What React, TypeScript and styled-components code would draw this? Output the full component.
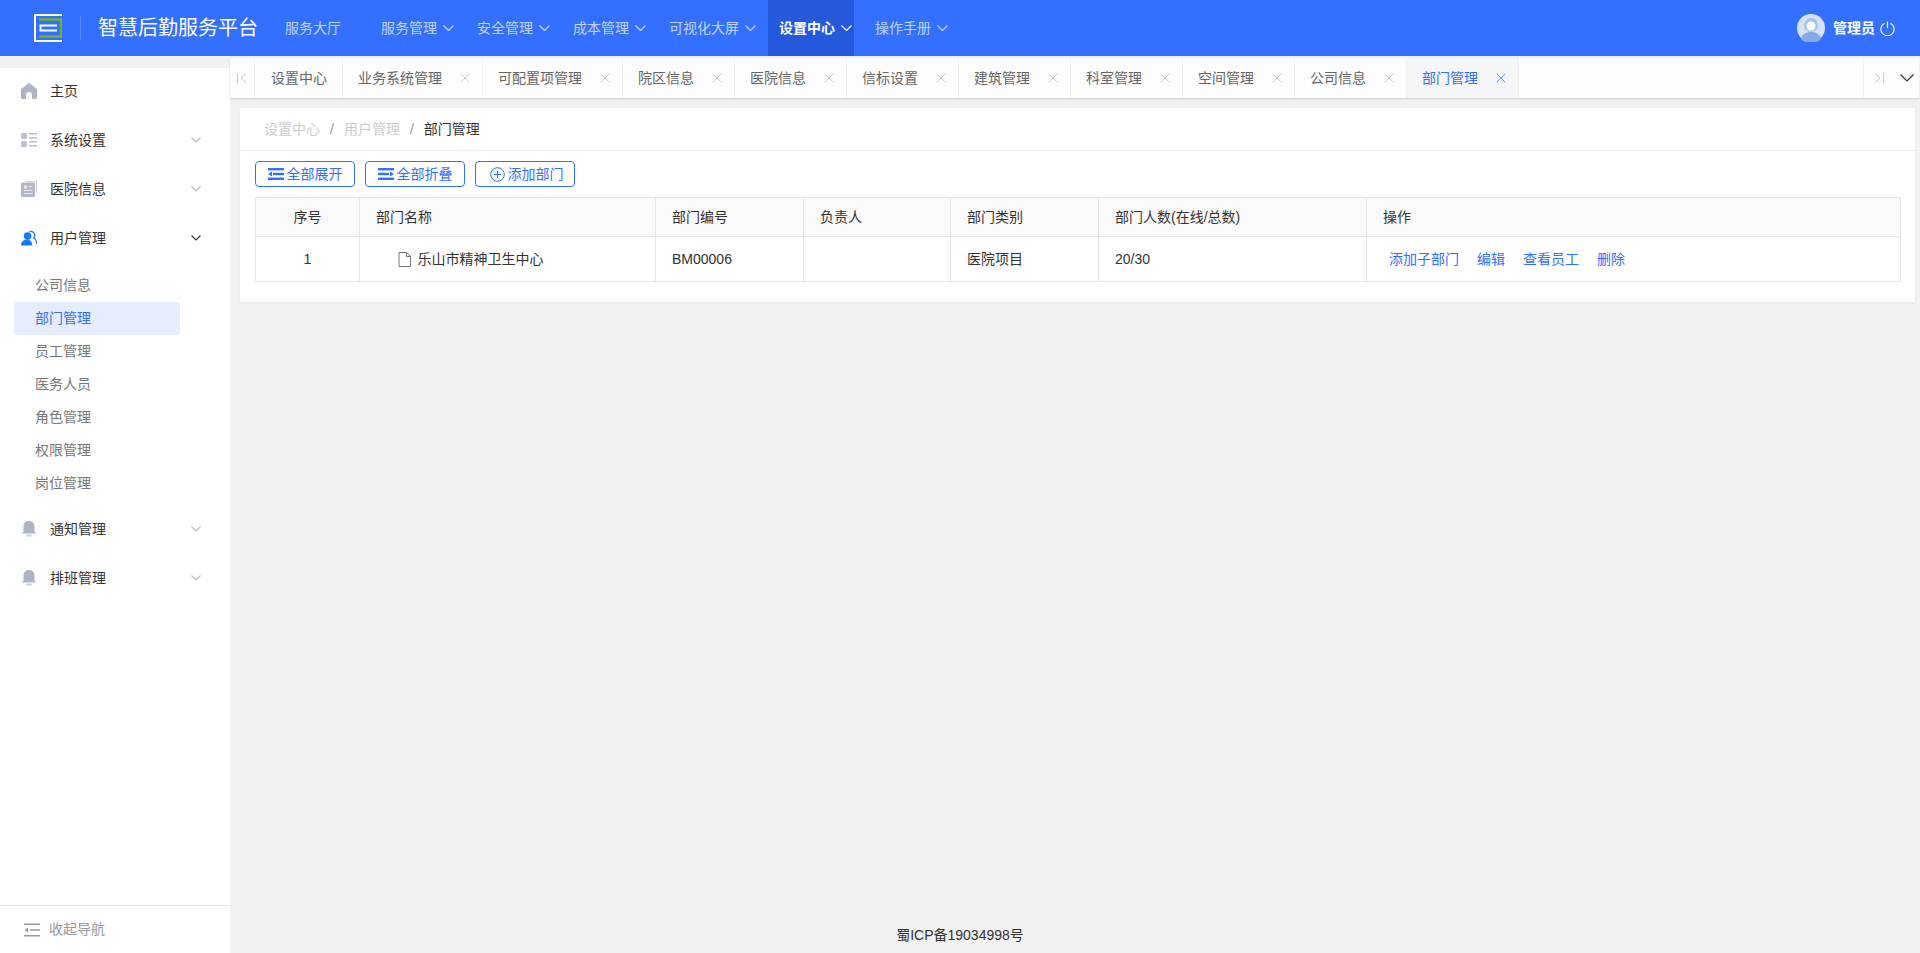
import React from 'react';
import styled, { createGlobalStyle } from 'styled-components';
import { X } from 'lucide-react';

const GlobalStyle = createGlobalStyle`
  html, body {
    margin: 0;
    height: 100%;
    overflow: hidden;
    background: #f1f1f1;
    font-family: "Liberation Sans", "Noto Sans CJK SC", sans-serif;
    font-size: 14px;
    line-height: 1.5;
    color: #333;
  }
  #root { height: 100%; }
`;

const Page = styled.div`
  display: flex;
  flex-direction: column;
  height: 953px;
`;

const Header = styled.header`
  display: flex;
  align-items: center;
  flex: 0 0 56px;
  height: 56px;
  background: #3370ff;
  color: #fff;
`;

const LogoBox = styled.div`
  display: flex;
  align-items: center;
  flex: 0 0 274px;
  padding-left: 34px;
  box-sizing: border-box;
`;

const LogoDivider = styled.span`
  width: 1px;
  height: 24px;
  margin: 0 17px 0 18px;
  background: rgba(255, 255, 255, 0.2);
`;

const Title = styled.span`
  font-size: 20px;
  white-space: nowrap;
`;

const Nav = styled.nav`
  display: flex;
  flex: 1;
  height: 56px;
`;

const NavItem = styled.div<{ $active?: boolean }>`
  display: flex;
  align-items: center;
  height: 56px;
  padding: 0 2px 0 11px;
  margin-right: 10px;
  font-size: 14px;
  font-weight: ${(p) => (p.$active ? 700 : 400)};
  color: ${(p) => (p.$active ? '#fff' : 'rgba(255, 255, 255, 0.7)')};
  background: ${(p) => (p.$active ? '#2559db' : 'transparent')};
  white-space: nowrap;
`;

const NavPlain = styled(NavItem)`
  padding-right: 19px;
`;

const NavArrow = styled.span`
  display: flex;
  margin-left: 6px;
  flex: none;
`;

const UserBox = styled.div`
  display: flex;
  align-items: center;
  padding-right: 25px;
`;

const UserName = styled.span`
  margin: 0 5px 0 8px;
  font-size: 14px;
  font-weight: 700;
`;

const Body = styled.div`
  display: flex;
  flex: 1;
  min-height: 0;
`;

const Sidebar = styled.aside`
  display: flex;
  flex-direction: column;
  flex: 0 0 230px;
  margin-top: 12px;
  background: #fff;
`;

const MenuScroll = styled.div`
  flex: 1;
`;

const MenuRow = styled.div`
  display: flex;
  align-items: center;
  height: 46px;
  margin-bottom: 3px;
  padding-left: 21px;
  color: #333;
`;

const MenuIcon = styled.span`
  display: flex;
  width: 16px;
  height: 16px;
  margin-right: 13px;
`;

const MenuLabel = styled.span`
  flex: 1;
`;

const MenuArrow = styled.span<{ $open?: boolean }>`
  display: flex;
  margin-right: 29px;
  color: ${(p) => (p.$open ? '#333' : '#bbb')};
`;

const SubMenu = styled.div`
  padding: 5px 0 6px;
`;

const SubItem = styled.div<{ $active?: boolean }>`
  display: flex;
  align-items: center;
  width: 166px;
  height: 33px;
  margin-left: 14px;
  padding-left: 21px;
  box-sizing: border-box;
  border-radius: 3px;
  color: ${(p) => (p.$active ? '#3370ff' : '#777')};
  background: ${(p) => (p.$active ? '#e5edff' : 'transparent')};
`;

const CollapseBar = styled.div`
  display: flex;
  align-items: center;
  flex: 0 0 48px;
  box-sizing: border-box;
  padding-left: 24px;
  border-top: 1px solid #e2e2e2;
  color: #999;
  svg {
    margin-right: 9px;
  }
`;

const Main = styled.main`
  display: flex;
  flex-direction: column;
  flex: 1;
  min-width: 0;
`;

const TabBar = styled.div`
  display: flex;
  flex: 0 0 40px;
  margin-top: 2px;
  background: #fdfdfd;
  box-shadow: 0 1px 2px rgba(0, 0, 0, 0.15);
`;

const TabArrow = styled.div<{ $w: number; $left?: boolean }>`
  display: flex;
  align-items: center;
  justify-content: center;
  flex: 0 0 ${(p) => p.$w}px;
  box-sizing: border-box;
  border-${(p) => (p.$left ? 'left' : 'right')}: 1px solid #f0f0f0;
`;

const TabList = styled.div`
  display: flex;
  flex: 1;
`;

const Tab = styled.div<{ $active?: boolean }>`
  display: flex;
  align-items: center;
  padding-left: 15px;
  box-sizing: border-box;
  border-right: 1px solid #f0f0f0;
  color: ${(p) => (p.$active ? '#3370ff' : '#666')};
  background: ${(p) => (p.$active ? '#f5f6f8' : 'transparent')};
  white-space: nowrap;
`;

const HomeTab = styled(Tab)`
  padding: 0 15px 0 16px;
`;

const TabClose = styled.span<{ $active?: boolean }>`
  display: flex;
  margin: 0 9px 0 15px;
  color: ${(p) => (p.$active ? '#3370ff' : '#bbb')};
`;

const Card = styled.section`
  margin: 10px 5px 0 10px;
  height: 194px;
  box-sizing: border-box;
  background: #fff;
  box-shadow: 0 1px 2px rgba(0, 0, 0, 0.05);
`;

const Breadcrumb = styled.div`
  display: flex;
  align-items: center;
  height: 43px;
  padding-left: 24px;
  box-sizing: border-box;
  border-bottom: 1px solid #eee;
`;

const Crumb = styled.span<{ $current?: boolean }>`
  color: ${(p) => (p.$current ? '#333' : '#ccc')};
`;

const CrumbSep = styled.span`
  margin: 0 10px;
  color: #999;
`;

const Toolbar = styled.div`
  display: flex;
  gap: 10px;
  padding: 10px 15px;
`;

const ToolButton = styled.button`
  display: flex;
  align-items: center;
  justify-content: center;
  width: 100px;
  height: 26px;
  padding: 0;
  gap: 3px;
  border: 1px solid #3370ff;
  border-radius: 4px;
  background: #fff;
  color: #3370ff;
  font: inherit;
`;

const TableWrap = styled.div`
  padding: 0 15px;
`;

const Table = styled.table`
  width: 100%;
  table-layout: fixed;
  border-collapse: collapse;
  border: 1px solid #e6e6e6;
`;

const Th = styled.th`
  height: 38px;
  padding: 0 16px;
  border: 1px solid #e6e6e6;
  background: #fafafa;
  font-weight: 400;
  text-align: left;
  color: #333;
`;

const Td = styled.td`
  height: 44px;
  padding: 0 16px;
  border: 1px solid #e6e6e6;
  color: #333;
`;

const CenterTh = styled(Th)`
  text-align: center;
`;

const CenterTd = styled(Td)`
  text-align: center;
`;

const NameCell = styled.div`
  display: flex;
  align-items: center;
  padding-left: 22px;
  gap: 6.5px;
`;

const Actions = styled.div`
  display: flex;
  padding-left: 6px;
  gap: 18px;
`;

const ActionLink = styled.a`
  color: #3370ff;
  cursor: pointer;
`;

const Footer = styled.footer`
  margin-top: auto;
  height: 28px;
  padding-right: 230px;
  text-align: center;
  color: #333;
`;

const Chevron = ({ w, stroke = 'currentColor' }: { w: number; stroke?: string }) => (
  <svg width={w} height={w / 2 + 1} viewBox={`0 0 ${w} ${w / 2 + 1}`} fill="none" stroke={stroke} strokeWidth="1.2">
    <path d={`M.5 .5 ${w / 2} ${w / 2} ${w - 0.5} .5`} />
  </svg>
);

const Logo = () => (
  <svg width="28" height="28" viewBox="0 0 28 28" fill="none">
    <path d="M28 1H1V27H28" stroke="#fff" strokeWidth="2" />
    <path d="M5 5.500H27V22.500H5" stroke="#6fb52c" strokeWidth="2.500" />
    <path d="M23 11.500H6.500V16.500H23" stroke="#fff" strokeWidth="2" />
  </svg>
);

const Avatar = () => (
  <svg width="28" height="28" viewBox="0 0 28 28">
    <circle cx="14" cy="14" r="14" fill="#d5e2f8" />
    <circle cx="14" cy="11" r="7" fill="#a9c2ee" />
    <circle cx="14" cy="12" r="4.500" fill="#fff" />
    <path d="M4 25c1-5 5-7 10-7s9 2 10 7a14 14 0 0 1-20 0z" fill="#86a8e4" />
  </svg>
);

const PowerIcon = () => (
  <svg width="15" height="15" viewBox="0 0 15 15" fill="none" stroke="#fff" strokeWidth="1.1">
    <path d="M4.600 2.200a6.600 6.600 0 1 0 5.800 0" />
    <path d="M7.500 0.500V7" />
  </svg>
);

const HomeIcon = () => (
  <svg width="16" height="16" viewBox="0 0 16 16" fill="#aeb3c6">
    <path d="M8 0 16 6V15a1 1 0 0 1-1 1H11V12A3 3 0 0 0 5 12V16H1a1 1 0 0 1-1-1V6z" />
  </svg>
);

const ListIcon = () => (
  <svg width="16" height="16" viewBox="0 0 16 16" fill="#bcc0d0">
    <rect x="0" y="1" width="6" height="6" rx="1.500" />
    <rect x="0" y="9" width="6" height="6" rx="1.500" />
    <rect x="8" y="1" width="8" height="1.600" />
    <rect x="8" y="5" width="8" height="1.600" />
    <rect x="8" y="9" width="8" height="1.600" />
    <rect x="8" y="13" width="8" height="1.600" />
  </svg>
);

const NewsIcon = () => (
  <svg width="16" height="16" viewBox="0 0 16 16">
    <path d="M5 .5H15.500V12" fill="none" stroke="#d0d3df" strokeWidth="1" />
    <rect x="0" y="1.500" width="14" height="14.500" rx="1.500" fill="#b4b8ca" />
    <rect x="3" y="4.500" width="3" height="3" fill="#e6e8ef" />
    <path d="M7.500 5.500H11.500M3 9.500H11.500M3 12.500H11.500" stroke="#e6e8ef" strokeWidth="1" />
  </svg>
);

const UsersIcon = () => (
  <svg width="17" height="16" viewBox="0 0 17 16">
    <path d="M9 1.200a4.200 4.200 0 0 1 4.500 6.800c1.800.8 3 3 3.200 6" fill="none" stroke="#1677ff" strokeWidth="1.300" />
    <circle cx="7" cy="6" r="4" fill="#1677ff" />
    <path d="M0 16c0-4 2.400-6.500 6.500-6.500 1 0 1.600.2 2 .4 2.300 1 3.500 3 3.500 6.100z" fill="#1677ff" />
  </svg>
);

const BellIcon = () => (
  <svg width="16" height="16" viewBox="0 0 16 16" fill="#aeb3c6">
    <path d="M8 0c3.500 0 5.500 2.300 5.500 5.500V10c0 1 .6 1.800 2.500 2.500H0C1.900 11.800 2.500 11 2.500 10V5.500C2.500 2.300 4.500 0 8 0z" />
    <rect x="5.500" y="13.500" width="5" height="2" fill="#c9ccd9" />
  </svg>
);

const CollapseIcon = ({ color = '#999' }: { color?: string }) => (
  <svg width="16" height="14" viewBox="0 0 16 14" fill={color}>
    <rect x="0" y="0.500" width="16" height="1.500" />
    <rect x="6" y="6.200" width="10" height="1.500" />
    <rect x="0" y="12" width="16" height="1.500" />
    <path d="M4 4.500V9.500L0.500 7z" />
  </svg>
);

const ExpandIcon = () => (
  <svg width="16" height="12" viewBox="0 0 16 12" fill="#3370ff">
    <rect x="0" y="0" width="16" height="2.400" />
    <rect x="5" y="4.800" width="11" height="2.400" />
    <rect x="0" y="9.600" width="16" height="2.400" />
    <path d="M4 3.500V8.500L0 6z" />
  </svg>
);

const FoldIcon = () => (
  <svg width="16" height="12" viewBox="0 0 16 12" fill="#3370ff">
    <rect x="0" y="0" width="16" height="2.400" />
    <rect x="0" y="4.800" width="11" height="2.400" />
    <rect x="0" y="9.600" width="16" height="2.400" />
    <path d="M12 3.500V8.500L16 6z" />
  </svg>
);

const PlusCircleIcon = () => (
  <svg width="18" height="15" viewBox="-3 0 18 15" fill="none" stroke="#3370ff" strokeWidth="1">
    <circle cx="7.500" cy="7.500" r="6.800" />
    <path d="M7.500 3.800V11.200M3.800 7.500H11.200" />
  </svg>
);

const FileIcon = () => (
  <svg width="13" height="15" viewBox="0 0 13 15" fill="none" stroke="#777" strokeWidth="1">
    <path d="M1 .5H8.500L12.500 4.500V14.500H1z" />
    <path d="M8.500 .5V4.500H12.500" />
  </svg>
);

const FirstIcon = () => (
  <svg width="10" height="10" viewBox="0 0 10 10" fill="none" stroke="#c8c8c8" strokeWidth="1">
    <path d="M.5 0V10M9 .5 4 5l5 4.500" />
  </svg>
);

const LastIcon = () => (
  <svg width="10" height="10" viewBox="0 0 10 10" fill="none" stroke="#c8c8c8" strokeWidth="1">
    <path d="M9.500 0V10M1 .5 6 5l-5 4.500" />
  </svg>
);

const navItems = [
  { label: '服务管理' },
  { label: '安全管理' },
  { label: '成本管理' },
  { label: '可视化大屏' },
  { label: '设置中心', active: true },
  { label: '操作手册' },
];

const tabs = [
  { label: '业务系统管理' },
  { label: '可配置项管理' },
  { label: '院区信息' },
  { label: '医院信息' },
  { label: '信标设置' },
  { label: '建筑管理' },
  { label: '科室管理' },
  { label: '空间管理' },
  { label: '公司信息' },
  { label: '部门管理', active: true },
];

const subItems = ['公司信息', '部门管理', '员工管理', '医务人员', '角色管理', '权限管理', '岗位管理'];

const MenuEntry: React.FC<{ icon: React.ReactNode; label: string; arrow?: boolean; open?: boolean }> = ({
  icon,
  label,
  arrow = true,
  open,
}) => (
  <MenuRow>
    <MenuIcon>{icon}</MenuIcon>
    <MenuLabel>{label}</MenuLabel>
    {arrow && (
      <MenuArrow $open={open}>
        <Chevron w={10} />
      </MenuArrow>
    )}
  </MenuRow>
);

export default function App() {
  return (
    <Page>
      <GlobalStyle />
      <Header>
        <LogoBox>
          <Logo />
          <LogoDivider />
          <Title>智慧后勤服务平台</Title>
        </LogoBox>
        <Nav>
          <NavPlain>服务大厅</NavPlain>
          {navItems.map((n) => (
            <NavItem key={n.label} $active={n.active}>
              {n.label}
              <NavArrow>
                <Chevron w={11} />
              </NavArrow>
            </NavItem>
          ))}
        </Nav>
        <UserBox>
          <Avatar />
          <UserName>管理员</UserName>
          <PowerIcon />
        </UserBox>
      </Header>
      <Body>
        <Sidebar>
          <MenuScroll>
            <MenuEntry icon={<HomeIcon />} label="主页" arrow={false} />
            <MenuEntry icon={<ListIcon />} label="系统设置" />
            <MenuEntry icon={<NewsIcon />} label="医院信息" />
            <MenuEntry icon={<UsersIcon />} label="用户管理" open />
            <SubMenu>
              {subItems.map((s) => (
                <SubItem key={s} $active={s === '部门管理'}>
                  {s}
                </SubItem>
              ))}
            </SubMenu>
            <MenuEntry icon={<BellIcon />} label="通知管理" />
            <MenuEntry icon={<BellIcon />} label="排班管理" />
          </MenuScroll>
          <CollapseBar>
            <CollapseIcon />
            收起导航
          </CollapseBar>
        </Sidebar>
        <Main>
          <TabBar>
            <TabArrow $w={25}>
              <FirstIcon />
            </TabArrow>
            <TabList>
              <HomeTab>设置中心</HomeTab>
              {tabs.map((t) => (
                <Tab key={t.label} $active={t.active}>
                  {t.label}
                  <TabClose $active={t.active}>
                    <X size={16} strokeWidth={1.1} />
                  </TabClose>
                </Tab>
              ))}
            </TabList>
            <TabArrow $w={31} $left>
              <LastIcon />
            </TabArrow>
            <TabArrow $w={26}>
              <Chevron w={14} stroke="#333" />
            </TabArrow>
          </TabBar>
          <Card>
            <Breadcrumb>
              <Crumb>设置中心</Crumb>
              <CrumbSep>/</CrumbSep>
              <Crumb>用户管理</Crumb>
              <CrumbSep>/</CrumbSep>
              <Crumb $current>部门管理</Crumb>
            </Breadcrumb>
            <Toolbar>
              <ToolButton>
                <ExpandIcon />
                全部展开
              </ToolButton>
              <ToolButton>
                <FoldIcon />
                全部折叠
              </ToolButton>
              <ToolButton>
                <PlusCircleIcon />
                添加部门
              </ToolButton>
            </Toolbar>
            <TableWrap>
              <Table>
                <colgroup>
                  <col width="104" />
                  <col width="296" />
                  <col width="148" />
                  <col width="147" />
                  <col width="148" />
                  <col width="268" />
                  <col width="534" />
                </colgroup>
                <thead>
                  <tr>
                    <CenterTh>序号</CenterTh>
                    <Th>部门名称</Th>
                    <Th>部门编号</Th>
                    <Th>负责人</Th>
                    <Th>部门类别</Th>
                    <Th>部门人数(在线/总数)</Th>
                    <Th>操作</Th>
                  </tr>
                </thead>
                <tbody>
                  <tr>
                    <CenterTd>1</CenterTd>
                    <Td>
                      <NameCell>
                        <FileIcon />
                        乐山市精神卫生中心
                      </NameCell>
                    </Td>
                    <Td>BM00006</Td>
                    <Td />
                    <Td>医院项目</Td>
                    <Td>20/30</Td>
                    <Td>
                      <Actions>
                        <ActionLink>添加子部门</ActionLink>
                        <ActionLink>编辑</ActionLink>
                        <ActionLink>查看员工</ActionLink>
                        <ActionLink>删除</ActionLink>
                      </Actions>
                    </Td>
                  </tr>
                </tbody>
              </Table>
            </TableWrap>
          </Card>
          <Footer>蜀ICP备19034998号</Footer>
        </Main>
      </Body>
    </Page>
  );
}
